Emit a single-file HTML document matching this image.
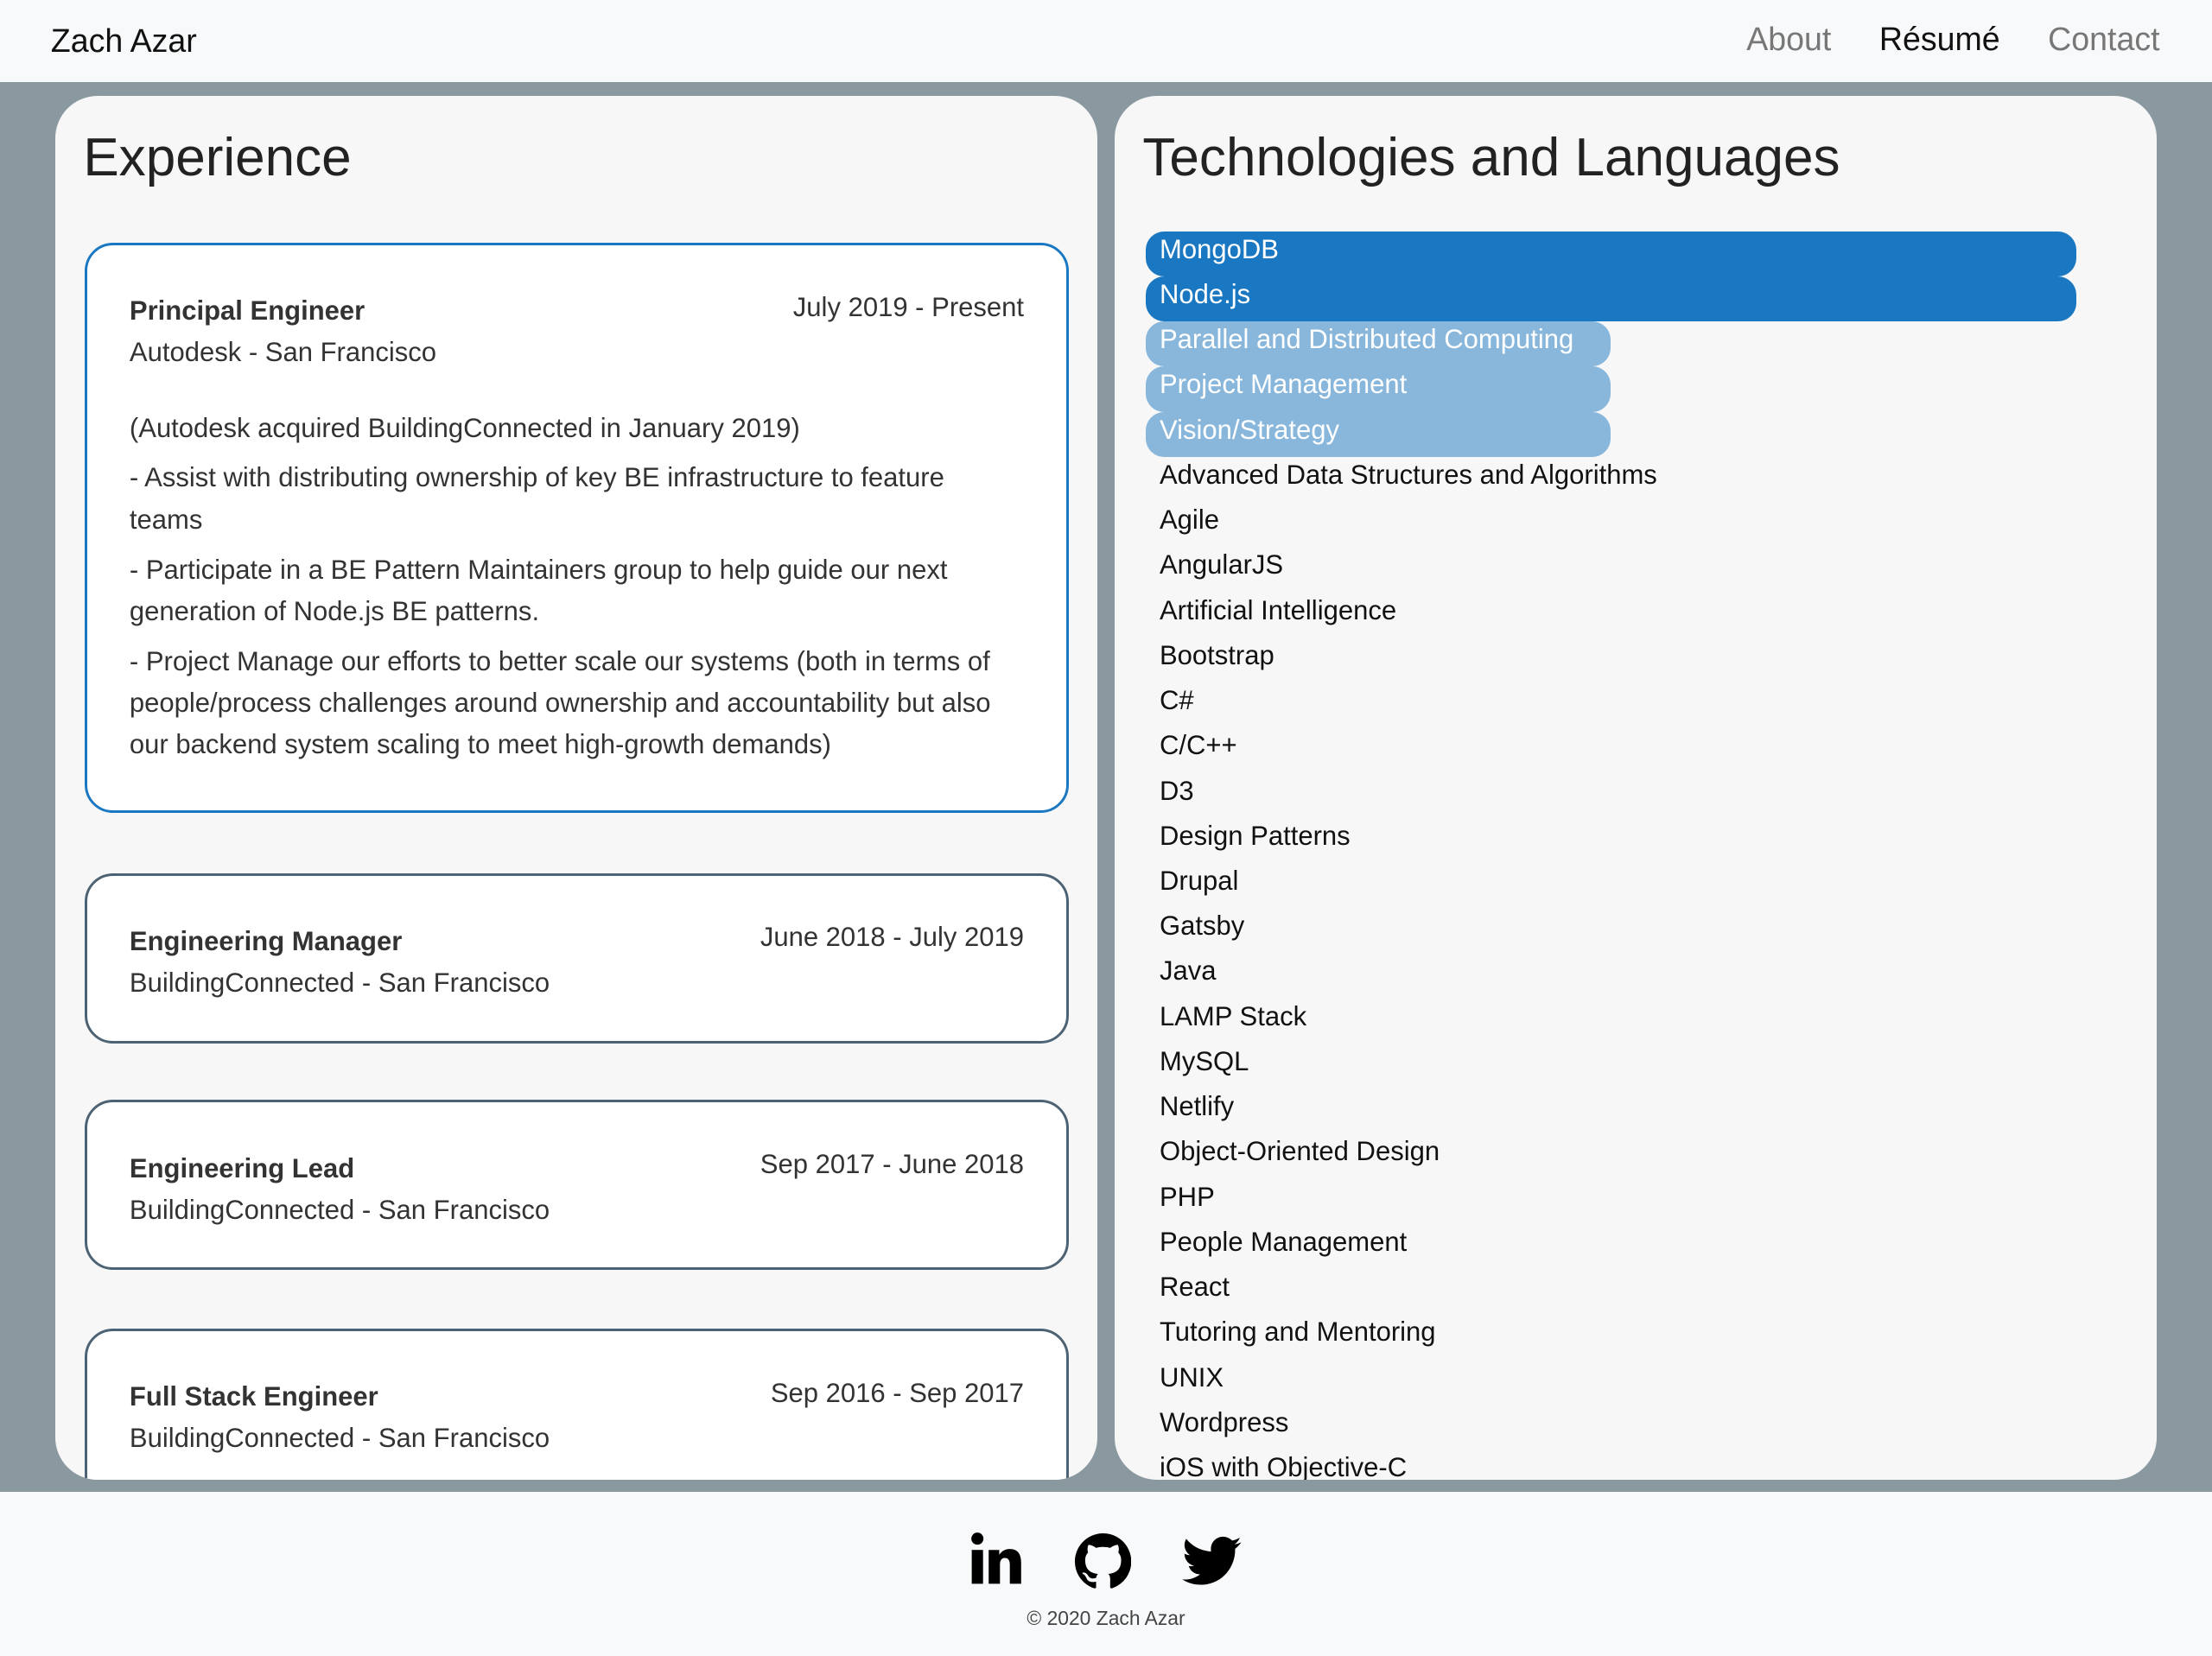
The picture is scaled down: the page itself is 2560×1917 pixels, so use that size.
<!DOCTYPE html>
<html><head><meta charset="utf-8"><style>
html,body{margin:0;padding:0;}
body{width:2560px;height:1916px;overflow:hidden;background:#f8f9fa;font-family:"Liberation Sans",sans-serif;}
#w{zoom:1.63265;width:1568px;height:1174px;position:relative;}
.nav{height:58px;background:#f8f9fa;position:relative;}
.brand{position:absolute;left:36px;top:16px;font-size:23px;color:#111;}
.links{position:absolute;right:37px;top:15px;font-size:23px;}
.links span{margin-left:34px;color:#777;}
.links span.a{color:#111;}
.main{position:absolute;top:58px;left:0;width:1568px;height:1000px;background:#8a989f;}
.card{position:absolute;top:10px;height:981px;width:739px;background:#f7f7f7;border-radius:30px;overflow:hidden;}
h1{font-size:38px;color:#222;margin:0;position:absolute;left:20px;top:22px;font-weight:normal;}
.job{position:absolute;left:21px;width:694px;background:#fff;border:2px solid #4d6272;border-radius:20px;font-size:19px;color:#333;}
.job.act{border-color:#1a78c2;}
.job .in{padding:32px 30px 0 30px;position:relative;}
.t{font-weight:bold;}
.d{position:absolute;right:30px;top:33px;}
.job p{margin:0;line-height:29.5px;}
.tech{position:absolute;left:22px;top:96px;font-size:19px;color:#111;}
.tech div{height:32px;line-height:26px;padding-left:10px;}
.pill{border-radius:13px;color:#fff;height:25px;box-sizing:border-box;}
.copy{position:absolute;top:1139px;width:1568px;text-align:center;font-size:14px;color:#444;}
</style></head><body><div id="w">
<div class="nav"><div class="brand">Zach Azar</div><div class="links"><span>About</span><span class="a">Résumé</span><span>Contact</span></div></div>
<div class="main">
<div class="card" style="left:39px">
<h1>Experience</h1>
<div class="job act" style="top:104px;height:401px"><div class="in">
<p class="t">Principal Engineer</p><span class="d">July 2019 - Present</span>
<p>Autodesk - San Francisco</p>
<p style="margin-top:24px">(Autodesk acquired BuildingConnected in January 2019)</p>
<p style="margin-top:6px">- Assist with distributing ownership of key BE infrastructure to feature teams</p>
<p style="margin-top:6px">- Participate in a BE Pattern Maintainers group to help guide our next generation of Node.js BE patterns.</p>
<p style="margin-top:6px">- Project Manage our efforts to better scale our systems (both in terms of people/process challenges around ownership and accountability but also our backend system scaling to meet high-growth demands)</p>
</div></div>
<div class="job" style="top:551px;height:117px"><div class="in"><p class="t">Engineering Manager</p><span class="d">June 2018 - July 2019</span><p>BuildingConnected - San Francisco</p></div></div>
<div class="job" style="top:712px;height:117px"><div class="in"><p class="t">Engineering Lead</p><span class="d">Sep 2017 - June 2018</span><p>BuildingConnected - San Francisco</p></div></div>
<div class="job" style="top:874px;height:140px"><div class="in"><p class="t">Full Stack Engineer</p><span class="d">Sep 2016 - Sep 2017</span><p>BuildingConnected - San Francisco</p></div></div>
</div>
<div class="card" style="left:790px">
<h1>Technologies and Languages</h1>
<div class="tech">
<div><div class="pill" style="width:660px;background:#1a78c2;margin-left:-10px;padding-left:10px">MongoDB</div></div>
<div><div class="pill" style="width:660px;background:#1a78c2;margin-left:-10px;padding-left:10px">Node.js</div></div>
<div><div class="pill" style="width:330px;background:#89b7dc;margin-left:-10px;padding-left:10px">Parallel and Distributed Computing</div></div>
<div><div class="pill" style="width:330px;background:#89b7dc;margin-left:-10px;padding-left:10px">Project Management</div></div>
<div><div class="pill" style="width:330px;background:#89b7dc;margin-left:-10px;padding-left:10px">Vision/Strategy</div></div>
<div>Advanced Data Structures and Algorithms</div><div>Agile</div><div>AngularJS</div><div>Artificial Intelligence</div><div>Bootstrap</div><div>C#</div><div>C/C++</div><div>D3</div><div>Design Patterns</div><div>Drupal</div><div>Gatsby</div><div>Java</div><div>LAMP Stack</div><div>MySQL</div><div>Netlify</div><div>Object-Oriented Design</div><div>PHP</div><div>People Management</div><div>React</div><div>Tutoring and Mentoring</div><div>UNIX</div><div>Wordpress</div><div>iOS with Objective-C</div>
</div></div>
</div>
<svg style="position:absolute;left:688px;top:1086px" width="38" height="38" viewBox="0 0 38 38"><circle cx="5" cy="5" r="4.3"/><rect x="1" y="13" width="8" height="24"/><path d="M13 13h7.5v3.5c1.5-2.5 4-4.2 7.5-4.2 5.5 0 8 3.5 8 9.5V37h-8V23.5c0-3-1-4.8-3.5-4.8S21 20.5 21 23.5V37h-8z"/></svg>
<svg style="position:absolute;left:762px;top:1087px" width="40" height="40" viewBox="0 0 16 16"><path d="M8 0C3.580 0 0 3.58 0 8c0 3.54 2.290 6.53 5.470 7.59.4.07.55-.17.55-.38 0-.19-.01-.82-.01-1.49-2.010.37-2.530-.49-2.690-.94-.09-.23-.48-.94-.82-1.130-.28-.15-.68-.52-.01-.53.63-.01 1.080.58 1.230.82.72 1.210 1.870.87 2.330.66.07-.52.28-.87.51-1.070-1.780-.2-3.640-.89-3.640-3.950 0-.87.31-1.590.82-2.150-.08-.2-.36-1.020.08-2.120 0 0 .67-.21 2.200.82.64-.18 1.320-.27 2-.27.68 0 1.360.09 2 .27 1.530-1.040 2.200-.82 2.200-.82.44 1.100.16 1.920.08 2.120.51.56.82 1.270.82 2.150 0 3.070-1.870 3.750-3.650 3.950.29.25.54.73.54 1.480 0 1.070-.01 1.930-.01 2.200 0 .21.15.46.55.38A8.013 8.013 0 0016 8c0-4.420-3.580-8-8-8z"/></svg>
<svg style="position:absolute;left:838px;top:1089px" width="42" height="36" viewBox="0 0 24 20"><path d="M24 2.3c-.9.4-1.800.7-2.800.8 1-.6 1.800-1.600 2.200-2.700-1 .6-2 1-3.100 1.200C19.300.6 18 0 16.600 0c-2.700 0-4.900 2.200-4.900 4.900 0 .4 0 .8.1 1.100C7.700 5.800 4.100 3.900 1.700.9c-.4.7-.7 1.600-.7 2.500 0 1.700.9 3.200 2.200 4.100-.8 0-1.600-.2-2.200-.6v.1c0 2.400 1.700 4.400 3.900 4.800-.4.1-.8.2-1.300.2-.3 0-.6 0-.9-.1.6 2 2.400 3.400 4.600 3.400-1.700 1.300-3.800 2.100-6.100 2.100-.4 0-.8 0-1.200-.1 2.200 1.400 4.800 2.200 7.500 2.200 9.100 0 14-7.500 14-14v-.6c1-.7 1.800-1.600 2.500-2.600z"/></svg>
<div class="copy">© 2020 Zach Azar</div>
</div></body></html>
